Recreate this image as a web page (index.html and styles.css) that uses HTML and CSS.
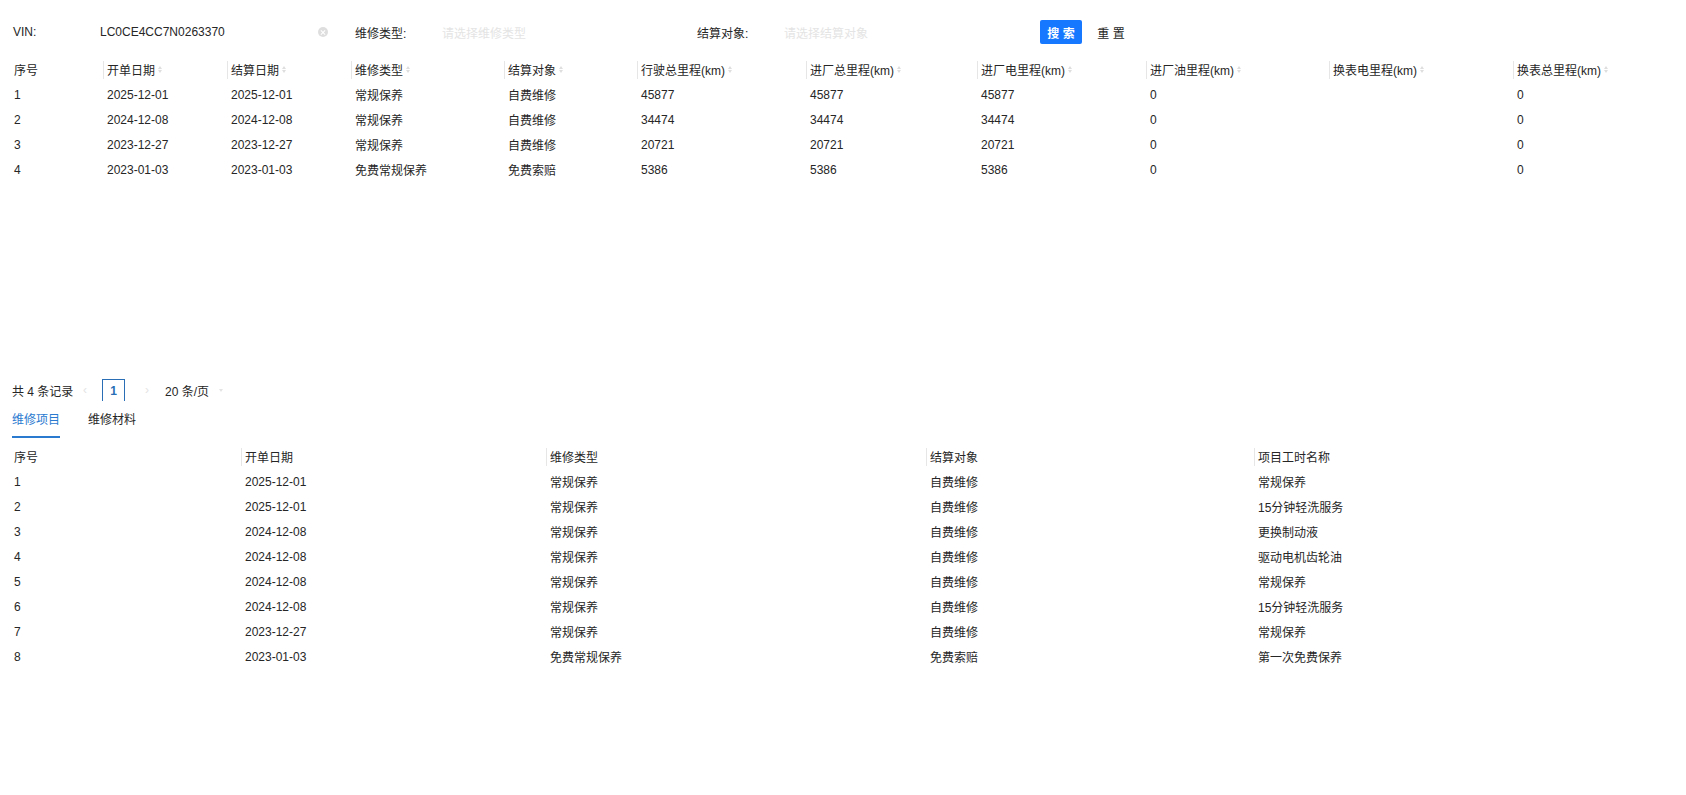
FILE: index.html
```html
<!DOCTYPE html>
<html lang="zh-CN">
<head>
<meta charset="utf-8">
<title>维修记录</title>
<link rel="stylesheet" href="styles.css">
</head>
<body>
<div class="page">
  <div class="search">
    <div class="item">
      <span class="lbl">VIN:</span>
      <div class="inp"><span class="val">LC0CE4CC7N0263370</span><span class="clear"></span></div>
    </div>
    <div class="item">
      <span class="lbl">维修类型:</span>
      <div class="inp"><span class="ph">请选择维修类型</span></div>
    </div>
    <div class="item">
      <span class="lbl">结算对象:</span>
      <div class="inp"><span class="ph">请选择结算对象</span></div>
    </div>
    <div class="btns">
      <button class="btn primary">搜 索</button>
      <button class="btn plain">重 置</button>
    </div>
  </div>

  <div class="table-wrap">
    <table class="grid">
      <colgroup>
        <col style="width:93px"><col style="width:124px"><col style="width:124px"><col style="width:153px"><col style="width:133px"><col style="width:169px"><col style="width:171px"><col style="width:169px"><col style="width:183px"><col style="width:184px"><col>
      </colgroup>
      <thead>
        <tr>
          <th><div class="h first">序号</div></th>
          <th><div class="h">开单日期<i class="sort"></i></div></th>
          <th><div class="h">结算日期<i class="sort"></i></div></th>
          <th><div class="h">维修类型<i class="sort"></i></div></th>
          <th><div class="h">结算对象<i class="sort"></i></div></th>
          <th><div class="h">行驶总里程(km)<i class="sort"></i></div></th>
          <th><div class="h">进厂总里程(km)<i class="sort"></i></div></th>
          <th><div class="h">进厂电里程(km)<i class="sort"></i></div></th>
          <th><div class="h">进厂油里程(km)<i class="sort"></i></div></th>
          <th><div class="h">换表电里程(km)<i class="sort"></i></div></th>
          <th><div class="h">换表总里程(km)<i class="sort"></i></div></th>
        </tr>
      </thead>
      <tbody>
        <tr><td>1</td><td>2025-12-01</td><td>2025-12-01</td><td>常规保养</td><td>自费维修</td><td>45877</td><td>45877</td><td>45877</td><td>0</td><td></td><td>0</td></tr>
        <tr><td>2</td><td>2024-12-08</td><td>2024-12-08</td><td>常规保养</td><td>自费维修</td><td>34474</td><td>34474</td><td>34474</td><td>0</td><td></td><td>0</td></tr>
        <tr><td>3</td><td>2023-12-27</td><td>2023-12-27</td><td>常规保养</td><td>自费维修</td><td>20721</td><td>20721</td><td>20721</td><td>0</td><td></td><td>0</td></tr>
        <tr><td>4</td><td>2023-01-03</td><td>2023-01-03</td><td>免费常规保养</td><td>免费索赔</td><td>5386</td><td>5386</td><td>5386</td><td>0</td><td></td><td>0</td></tr>
      </tbody>
    </table>
  </div>

  <div class="pager">
    <span class="total">共 4 条记录</span>
    <span class="arrow prev">‹</span>
    <span class="pnum">1</span>
    <span class="arrow next">›</span>
    <span class="size">20 条/页</span>
    <span class="caret"></span>
  </div>

  <div class="tabs">
    <div class="tab active">维修项目</div>
    <div class="tab">维修材料</div>
  </div>

  <table class="grid detail">
    <colgroup>
      <col style="width:231px"><col style="width:305px"><col style="width:380px"><col style="width:328px"><col>
    </colgroup>
    <thead>
      <tr>
        <th><div class="h first">序号</div></th>
        <th><div class="h">开单日期</div></th>
        <th><div class="h">维修类型</div></th>
        <th><div class="h">结算对象</div></th>
        <th><div class="h">项目工时名称</div></th>
      </tr>
    </thead>
    <tbody>
      <tr><td>1</td><td>2025-12-01</td><td>常规保养</td><td>自费维修</td><td>常规保养</td></tr>
      <tr><td>2</td><td>2025-12-01</td><td>常规保养</td><td>自费维修</td><td>15分钟轻洗服务</td></tr>
      <tr><td>3</td><td>2024-12-08</td><td>常规保养</td><td>自费维修</td><td>更换制动液</td></tr>
      <tr><td>4</td><td>2024-12-08</td><td>常规保养</td><td>自费维修</td><td>驱动电机齿轮油</td></tr>
      <tr><td>5</td><td>2024-12-08</td><td>常规保养</td><td>自费维修</td><td>常规保养</td></tr>
      <tr><td>6</td><td>2024-12-08</td><td>常规保养</td><td>自费维修</td><td>15分钟轻洗服务</td></tr>
      <tr><td>7</td><td>2023-12-27</td><td>常规保养</td><td>自费维修</td><td>常规保养</td></tr>
      <tr><td>8</td><td>2023-01-03</td><td>免费常规保养</td><td>免费索赔</td><td>第一次免费保养</td></tr>
    </tbody>
  </table>
</div>
</body>
</html>
```

FILE: styles.css
```css
* { box-sizing: border-box; }

html, body {
  margin: 0;
  padding: 0;
  background: #fff;
}

body {
  font-family: "Liberation Sans", "Noto Sans CJK SC", sans-serif;
  font-size: 12px;
  color: #262626;
}

.page {
  padding: 0 10px;
}

/* search form */
.search {
  display: flex;
  align-items: center;
  height: 24px;
  margin-top: 20px;
  padding-left: 3px;
}

.item {
  display: flex;
  align-items: center;
  width: 342px;
  flex: none;
}

.lbl {
  width: 87px;
  flex: none;
  white-space: nowrap;
}

.inp {
  position: relative;
  width: 230px;
  height: 24px;
  display: flex;
  align-items: center;
}

.val {
  color: #262626;
}

.ph {
  color: #e4e4e4;
}

.clear {
  position: absolute;
  right: 2px;
  top: 7px;
  width: 10px;
  height: 10px;
  border-radius: 50%;
  background: #dedede;
}

.clear::before,
.clear::after {
  content: "";
  position: absolute;
  left: 2px;
  top: 4.5px;
  width: 6px;
  height: 1px;
  background: #fff;
  transform: rotate(45deg);
}

.clear::after {
  transform: rotate(-45deg);
}

.btns {
  display: flex;
  align-items: center;
  gap: 8px;
  margin-left: 1px;
}

.btn {
  font-family: inherit;
  font-size: 12px;
  height: 24px;
  width: 42px;
  padding: 0;
  border: 0;
  border-radius: 2px;
  cursor: pointer;
  white-space: nowrap;
}

.btn.primary {
  background: #1677ff;
  color: #fff;
  font-weight: bold;
}

.btn.plain {
  background: transparent;
  color: #262626;
}

/* tables */
.table-wrap {
  height: 321px;
  margin-top: 13px;
}

.grid {
  width: 1666px;
  table-layout: fixed;
  border-collapse: collapse;
}

.grid th,
.grid td {
  padding: 0;
  height: 25px;
  font-weight: normal;
  text-align: left;
  white-space: nowrap;
  overflow: hidden;
  vertical-align: middle;
}

.grid td {
  padding-left: 4px;
}

.h {
  display: flex;
  align-items: center;
  height: 18px;
  border-left: 1px solid #e6e6e6;
  padding-left: 3px;
}

.h.first {
  border-left: 0;
  padding-left: 4px;
}

.sort {
  display: inline-flex;
  flex-direction: column;
  gap: 1px;
  margin-left: 3px;
}

.sort::before,
.sort::after {
  content: "";
  width: 0;
  height: 0;
  border-left: 2px solid transparent;
  border-right: 2px solid transparent;
}

.sort::before {
  border-bottom: 3px solid #dedede;
}

.sort::after {
  border-top: 3px solid #dedede;
}

/* pager */
.pager {
  display: flex;
  align-items: center;
  height: 24px;
  padding-left: 2px;
}

.total {
  width: 71px;
}

.arrow {
  color: #e4e4e4;
  font-size: 12px;
  width: 14px;
}

.pnum {
  width: 23px;
  height: 22px;
  margin-left: 5px;
  border: 1px solid #2a6fb5;
  border-bottom: 0;
  color: #2a6fb5;
  font-weight: bold;
  display: flex;
  align-items: center;
  justify-content: center;
}

.arrow.next {
  margin-left: 20px;
}

.size {
  margin-left: 6px;
}

.caret {
  margin-left: 10px;
  width: 0;
  height: 0;
  border-left: 2px solid transparent;
  border-right: 2px solid transparent;
  border-top: 3px solid #e4e4e4;
}

/* tabs */
.tabs {
  display: flex;
  gap: 28px;
  height: 34px;
  margin-top: 2px;
  padding-left: 2px;
}

.tab {
  height: 34px;
  line-height: 32px;
  border-bottom: 2px solid transparent;
  color: #262626;
}

.tab.active {
  color: #2a7ad0;
  border-bottom-color: #2a7ad0;
}

.detail {
  margin-top: 6px;
}
```
